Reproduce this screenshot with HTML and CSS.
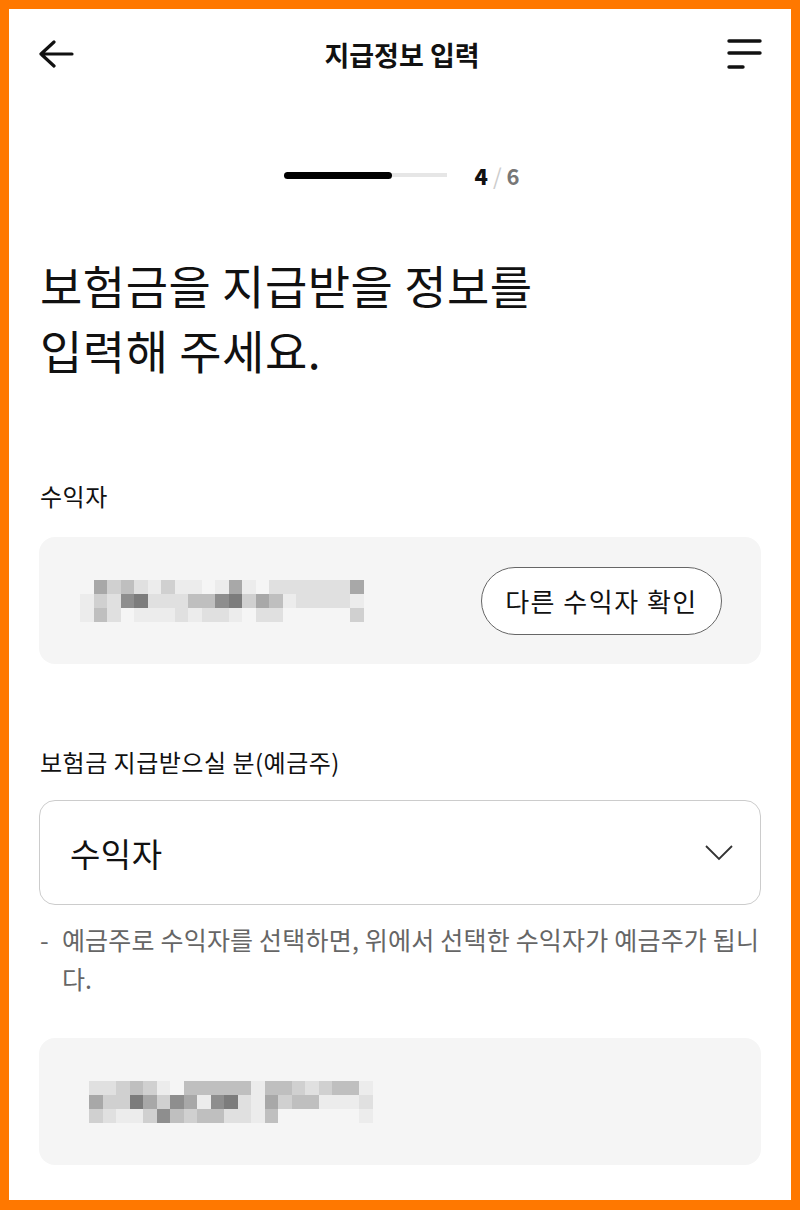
FILE: index.html
```html
<html>

<head>
    <title>지급정보 입력</title>
    <link rel="stylesheet" href="styles.css">
</head>

<body>
    <div class="frame">
        <div class="header">
            <svg class="icon" width="40" height="40" viewBox="0 0 40 40">
                <path d="M33 20 H2 M15 8 L2 20 L15 32" fill="none" stroke="#111" stroke-width="3.2" stroke-linecap="round" stroke-linejoin="round"/>
            </svg>
            <div class="title">지급정보 입력</div>
            <svg class="icon" width="40" height="40" viewBox="0 0 40 40">
                <path d="M6 7 H37 M6 19 H37 M6 33 H20" fill="none" stroke="#111" stroke-width="3.4" stroke-linecap="round"/>
            </svg>
        </div>

        <div class="progress">
            <div class="track"><div class="fill"></div></div>
            <div class="step"><b>4</b> <span class="slash">/</span> <span class="total">6</span></div>
        </div>

        <h1>보험금을 지급받을 정보를<br>입력해 주세요.</h1>

        <div class="label first">수익자</div>
        <div class="card">
            <div class="mosaic">
                <i class="s0"></i><i class="s5"></i><i class="s3"></i><i class="s4"></i><i class="s2"></i><i class="s1"></i><i class="s3"></i><i class="s1"></i><i class="s1"></i><i class="s0"></i><i class="s1"></i><i class="s5"></i><i class="s1"></i><i class="s0"></i><i class="s2"></i><i class="s2"></i><i class="s2"></i><i class="s2"></i><i class="s2"></i><i class="s2"></i><i class="s5"></i>
                <i class="s1"></i><i class="s3"></i><i class="s2"></i><i class="s6"></i><i class="s7"></i><i class="s2"></i><i class="s2"></i><i class="s2"></i><i class="s4"></i><i class="s4"></i><i class="s6"></i><i class="s7"></i><i class="s3"></i><i class="s5"></i><i class="s4"></i><i class="s1"></i><i class="s2"></i><i class="s2"></i><i class="s2"></i><i class="s2"></i><i class="s1"></i>
                <i class="s1"></i><i class="s4"></i><i class="s2"></i><i class="s0"></i><i class="s1"></i><i class="s1"></i><i class="s1"></i><i class="s2"></i><i class="s1"></i><i class="s2"></i><i class="s2"></i><i class="s1"></i><i class="s0"></i><i class="s2"></i><i class="s2"></i><i class="s0"></i><i class="s0"></i><i class="s0"></i><i class="s0"></i><i class="s0"></i><i class="s3"></i>
            </div>
            <button class="other">다른 수익자 확인</button>
        </div>

        <div class="label">보험금 지급받으실 분(예금주)</div>
        <div class="select">
            <span>수익자</span>
            <svg width="28" height="18" viewBox="0 0 28 18">
                <path d="M1 2 L14 15 L27 2" fill="none" stroke="#333" stroke-width="1.8"/>
            </svg>
        </div>
        <div class="note">
            <span class="dash">-</span>
            <span>예금주로 수익자를 선택하면, 위에서 선택한 수익자가 예금주가 됩니다.</span>
        </div>

        <div class="card second">
            <div class="mosaic">
                <i class="s2"></i><i class="s2"></i><i class="s3"></i><i class="s4"></i><i class="s3"></i><i class="s1"></i><i class="s0"></i><i class="s4"></i><i class="s4"></i><i class="s4"></i><i class="s4"></i><i class="s4"></i><i class="s1"></i><i class="s4"></i><i class="s4"></i><i class="s3"></i><i class="s2"></i><i class="s3"></i><i class="s4"></i><i class="s4"></i><i class="s1"></i>
                <i class="s5"></i><i class="s3"></i><i class="s3"></i><i class="s7"></i><i class="s5"></i><i class="s3"></i><i class="s6"></i><i class="s5"></i><i class="s1"></i><i class="s6"></i><i class="s7"></i><i class="s2"></i><i class="s1"></i><i class="s5"></i><i class="s3"></i><i class="s4"></i><i class="s4"></i><i class="s1"></i><i class="s1"></i><i class="s1"></i><i class="s2"></i>
                <i class="s3"></i><i class="s2"></i><i class="s1"></i><i class="s1"></i><i class="s3"></i><i class="s6"></i><i class="s4"></i><i class="s3"></i><i class="s4"></i><i class="s4"></i><i class="s2"></i><i class="s2"></i><i class="s1"></i><i class="s4"></i><i class="s0"></i><i class="s0"></i><i class="s0"></i><i class="s0"></i><i class="s0"></i><i class="s0"></i><i class="s1"></i>
            </div>
        </div>
    </div>
</body>

</html>
```
FILE: styles.css
```css
body {
    margin: 0;
    font-family: "Noto Sans CJK KR", "Noto Sans", sans-serif;
    color: #111;
}

.frame {
    height: 1210px;
    box-sizing: border-box;
    border: 9px solid #ff7800;
    border-bottom-width: 10px;
    padding: 0 28px 0 30px;
    background: #fff;
}

.header {
    height: 90px;
    display: flex;
    align-items: center;
    justify-content: space-between;
}

.icon {
    display: block;
}

.title {
    font-size: 27px;
    font-weight: bold;
    margin-left: 2px;
}

.progress {
    margin-top: 64px;
    height: 24px;
    display: flex;
    align-items: center;
    justify-content: center;
    gap: 27px;
    padding-left: 2px;
}

.track {
    width: 163px;
    height: 4px;
    background: #e6e6e6;
    display: flex;
    align-items: center;
}

.fill {
    width: 108px;
    height: 7px;
    border-radius: 4px;
    background: #000;
}

.step {
    font-size: 22px;
    font-weight: bold;
    line-height: 24px;
}

.slash {
    color: #ccc;
    font-weight: normal;
}

.total {
    color: #777;
}

h1 {
    margin: 65px 0 0 1px;
    font-size: 46px;
    font-weight: normal;
    line-height: 65px;
    letter-spacing: 0.5px;
}

.label {
    margin-top: 82px;
    font-size: 24px;
    line-height: 32px;
    letter-spacing: 0.5px;
    padding-left: 1px;
}

.label.first {
    margin-top: 98px;
}

.card {
    margin-top: 25px;
    margin-right: 2px;
    height: 127px;
    box-sizing: border-box;
    background: #f5f5f5;
    border-radius: 16px;
    display: flex;
    align-items: center;
    justify-content: space-between;
    padding: 0 39px 0 41px;
}

.card.second {
    margin-top: 40px;
    padding-left: 50px;
}

.mosaic {
    display: grid;
    grid-template-columns: repeat(21, 13.5px);
    grid-auto-rows: 14px;
}

.mosaic i {
    display: block;
}

.s0 { background: transparent; }
.s1 { background: #ececec; }
.s2 { background: #e0e0e0; }
.s3 { background: #d0d0d0; }
.s4 { background: #bfbfbf; }
.s5 { background: #a8a8a8; }
.s6 { background: #8e8e8e; }
.s7 { background: #7c7c7c; }

.other {
    width: 241px;
    height: 68px;
    border: 1.5px solid #666;
    border-radius: 34px;
    background: #fff;
    font-family: inherit;
    font-size: 26px;
    color: #111;
    letter-spacing: 1.5px;
    padding: 0;
}

.select {
    margin-top: 22px;
    margin-right: 2px;
    height: 105px;
    box-sizing: border-box;
    border: 1.5px solid #ccc;
    border-radius: 16px;
    display: flex;
    align-items: center;
    justify-content: space-between;
    padding: 0 27px 0 30px;
    font-size: 33px;
    letter-spacing: 0.5px;
}

.select svg {
    display: block;
}

.note {
    margin-top: 15px;
    display: flex;
    gap: 13px;
    padding-left: 1px;
    font-size: 25px;
    line-height: 39px;
    color: #666;
    letter-spacing: 0.2px;
}
```
